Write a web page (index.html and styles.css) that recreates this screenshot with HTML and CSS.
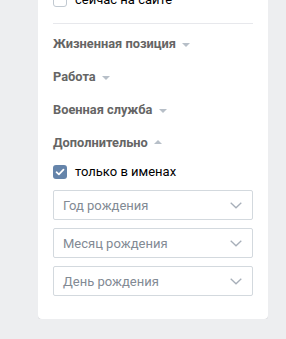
FILE: index.html
```html
<!DOCTYPE html>
<html>
  <head>
    <title>Поиск людей</title>
    <link rel="stylesheet" href="styles.css">
  </head>
  <body>
    <div class="card">
      <label class="check-row online">
        <span class="box"></span>
        <span class="check-text">сейчас на сайте</span>
      </label>
      <div class="divider"></div>

      <div class="section-title">Жизненная позиция <span class="arrow down"></span></div>
      <div class="section-title">Работа <span class="arrow down"></span></div>
      <div class="section-title">Военная служба <span class="arrow down"></span></div>
      <div class="section-title">Дополнительно <span class="arrow up"></span></div>

      <label class="check-row names">
        <span class="box checked">
          <svg width="10" height="8" viewBox="0 0 10 8"><path d="M1.5 4.2 L3.9 6.4 L8.5 1.6" fill="none" stroke="#fff" stroke-width="1.7" stroke-linecap="round" stroke-linejoin="round"/></svg>
        </span>
        <span class="check-text">только в именах</span>
      </label>

      <div class="select">
        <span class="placeholder">Год рождения</span>
        <svg class="chevron" width="12" height="7" viewBox="0 0 12 7"><path d="M0.7 0.7 L6 5.8 L11.3 0.7" fill="none" stroke="#a7afb9" stroke-width="1.3"/></svg>
      </div>
      <div class="select">
        <span class="placeholder">Месяц рождения</span>
        <svg class="chevron" width="12" height="7" viewBox="0 0 12 7"><path d="M0.7 0.7 L6 5.8 L11.3 0.7" fill="none" stroke="#a7afb9" stroke-width="1.3"/></svg>
      </div>
      <div class="select">
        <span class="placeholder">День рождения</span>
        <svg class="chevron" width="12" height="7" viewBox="0 0 12 7"><path d="M0.7 0.7 L6 5.8 L11.3 0.7" fill="none" stroke="#a7afb9" stroke-width="1.3"/></svg>
      </div>
    </div>
  </body>
</html>
```

FILE: styles.css
```css
body {
  margin: 0;
  background: #edeef0;
  font-family: Roboto, "Liberation Sans", sans-serif;
  font-size: 13px;
  color: #000;
}
.card {
  margin: -7px 0 0 38px;
  width: 200px;
  padding: 0 15px 23px;
  background: #fff;
  border-radius: 0 0 4px 4px;
  box-shadow: 0 1px 0 0 #d7d8db;
}
.check-row {
  display: flex;
  align-items: center;
  height: 14px;
}
.box {
  width: 12px;
  height: 12px;
  border: 1px solid #c1c9d1;
  border-radius: 3px;
  background: #fff;
  display: flex;
  align-items: center;
  justify-content: center;
}
.box.checked {
  width: 14px;
  height: 14px;
  border: none;
  background: #6584aa;
}
.check-text {
  margin-left: 8px;
  line-height: 16px;
}
.divider {
  height: 1px;
  background: #e7e8ec;
  margin: 16px 0 3px;
}
.section-title {
  font-weight: bold;
  color: #656565;
  font-size: 12.8px;
  line-height: 17px;
  padding: 8px 0;
}
.arrow {
  display: inline-block;
  width: 0;
  height: 0;
  margin-left: 3px;
  vertical-align: middle;
  border-left: 4px solid transparent;
  border-right: 4px solid transparent;
}
.arrow.down {
  border-top: 4px solid #b7bfc8;
}
.arrow.up {
  border-bottom: 4px solid #b7bfc8;
  position: relative;
  top: -2px;
}
.names {
  margin-top: 6px;
  margin-bottom: 11px;
}
.select {
  height: 28px;
  border: 1px solid #d3d9de;
  border-radius: 2px;
  padding: 0 9px;
  display: flex;
  align-items: center;
  justify-content: space-between;
  margin-bottom: 8px;
}
.select:last-child {
  margin-bottom: 0;
}
.placeholder {
  color: #828a94;
}
.chevron {
  margin-right: 1px;
}
```
